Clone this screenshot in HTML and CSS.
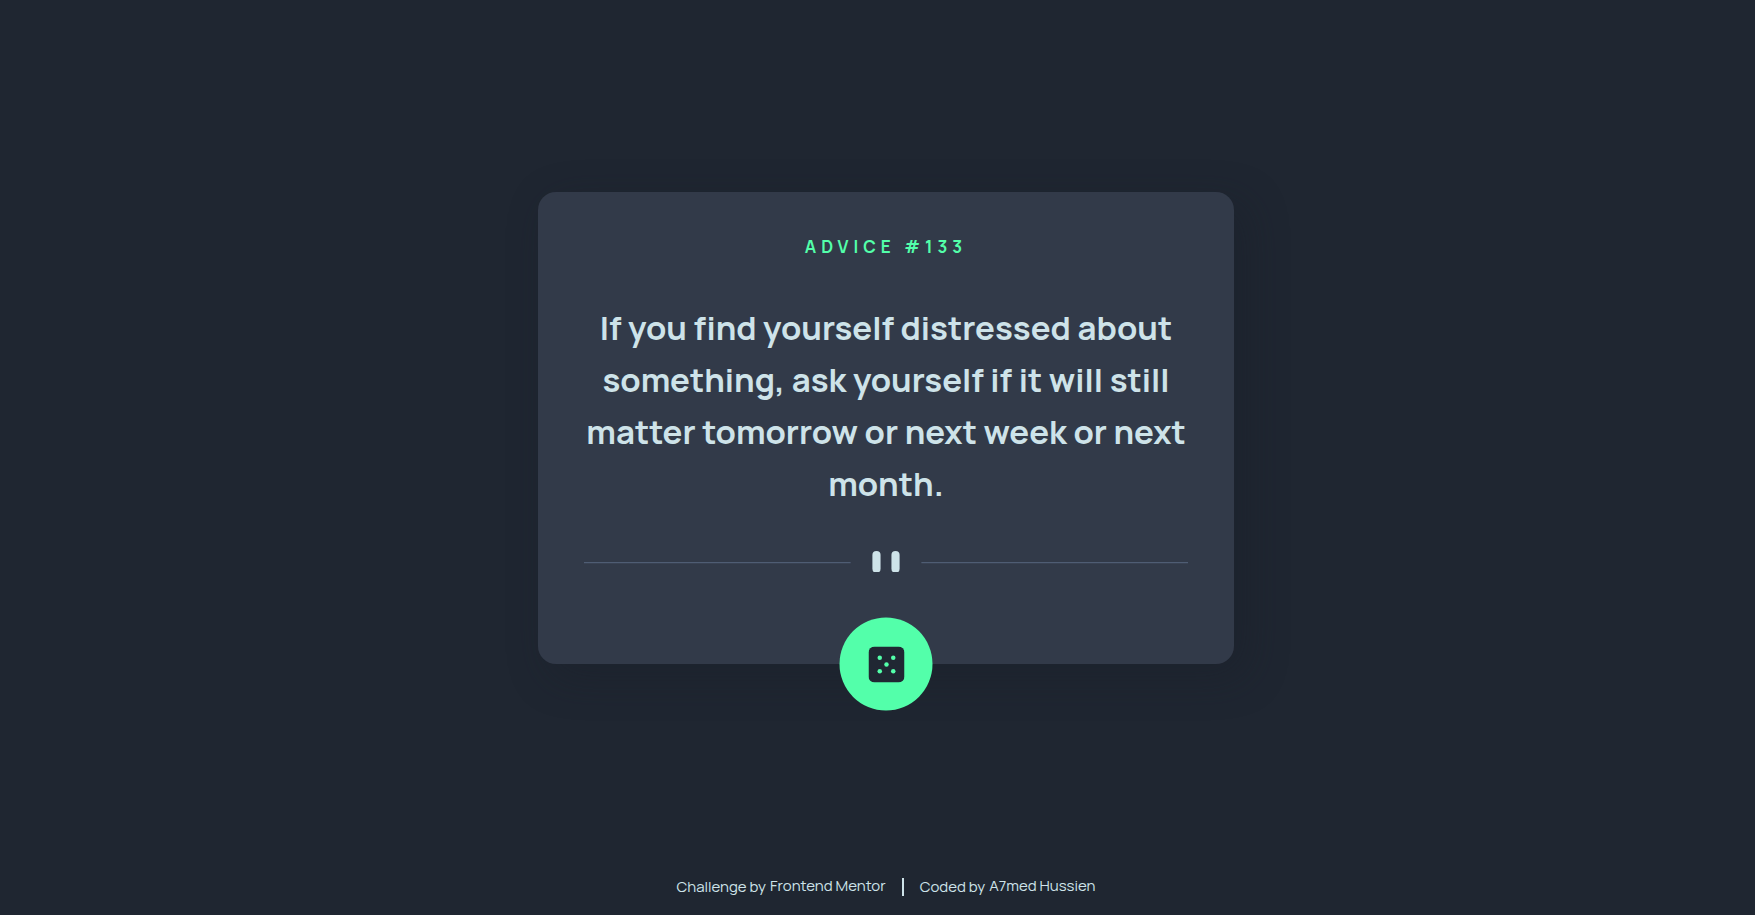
FILE: index.html
```
<!DOCTYPE html>
<html lang="en">
<head>
<meta charset="utf-8">
<meta name="viewport" content="width=device-width, initial-scale=1">
<title>Advice generator</title>
<link rel="stylesheet" href="styles.css">
</head>
<body>
<main class="main">
  <article class="card">
    <h1 class="card-title">ADVICE #133</h1>
    <p class="card-text">If you find yourself distressed about something, ask yourself if it will still matter tomorrow or next week or next month.</p>
    <svg class="divider" viewBox="0 0 444 16" aria-hidden="true">
      <path fill="#4f5d74" d="M0 8h196v1H0zM248 8h196v1H248z"/>
      <rect fill="#cee3e9" x="212" width="6" height="16" rx="3"/>
      <rect fill="#cee3e9" x="226" width="6" height="16" rx="3"/>
    </svg>
    <button class="dice" type="button" aria-label="New advice">
      <svg class="dice-icon" viewBox="0 0 24 24" aria-hidden="true">
        <rect fill="#202733" width="24" height="24" rx="4"/>
        <g fill="#53ffaa">
          <circle cx="7.5" cy="7.5" r="1.5"/>
          <circle cx="16.5" cy="7.5" r="1.5"/>
          <circle cx="12" cy="12" r="1.5"/>
          <circle cx="7.5" cy="16.5" r="1.5"/>
          <circle cx="16.5" cy="16.5" r="1.5"/>
        </g>
      </svg>
    </button>
  </article>
</main>
<footer class="footer">
  <p class="credit">Challenge by <a class="credit-link" href="#">Frontend Mentor</a></p>
  <span class="separator"></span>
  <p class="credit">Coded by <a class="credit-link" href="#">A7med Hussien</a></p>
</footer>
</body>
</html>
```
FILE: styles.css
```
* {
  box-sizing: border-box;
  margin: 0;
}

body {
  display: flex;
  flex-direction: column;
  min-height: 100vh;
  padding-left: 17px;
  background: #1f2631;
  color: #cee3e9;
  font-family: Manrope, Inter, sans-serif;
}

.main {
  flex: 1;
  display: flex;
  align-items: center;
  justify-content: center;
  padding-bottom: 20px;
}

.card {
  position: relative;
  width: 100%;
  max-width: 696px;
  padding: 43px 46px 92px;
  border-radius: 18px;
  background: #323a49;
  box-shadow: 12px 12px 40px rgba(24, 29, 39, 0.4);
  text-align: center;
}

.card-title {
  color: #53ffaa;
  font-size: 17px;
  font-weight: 700;
  line-height: 24px;
  letter-spacing: 5px;
}

.card-text {
  margin-top: 43px;
  font-size: 33px;
  font-weight: 700;
  font-variant-ligatures: none;
  line-height: 52px;
}

.divider {
  display: block;
  width: 100%;
  margin-top: 41px;
}

.dice {
  position: absolute;
  left: 50%;
  bottom: 0;
  display: grid;
  place-items: center;
  width: 93px;
  height: 93px;
  padding: 0;
  border: 0;
  border-radius: 50%;
  background: #53ffaa;
  transform: translate(-50%, 50%);
  cursor: pointer;
}

.dice-icon {
  width: 36px;
  height: 36px;
}

.footer {
  display: flex;
  align-items: center;
  justify-content: center;
  gap: 16px;
  padding-bottom: 17px;
}

.credit {
  display: flex;
  align-items: center;
  gap: 4px;
  font-size: 15px;
  line-height: 20px;
}

.credit-link {
  padding-bottom: 2px;
  color: inherit;
  text-decoration: none;
}

.separator {
  width: 2px;
  height: 18px;
  background: #cee3e9;
}
```
